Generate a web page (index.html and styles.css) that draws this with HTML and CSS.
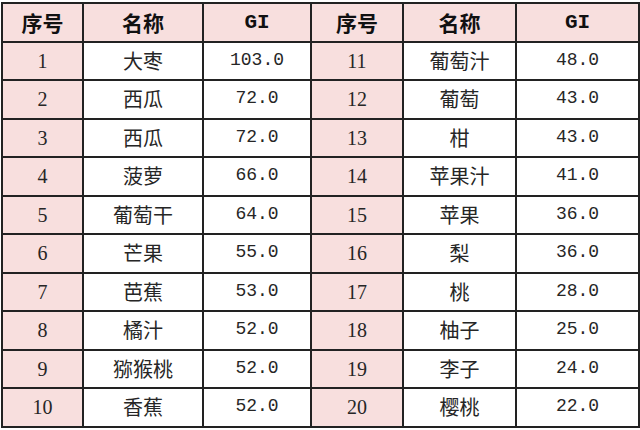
FILE: index.html
```html
<!DOCTYPE html>
<html lang="zh-CN">
<head>
<meta charset="utf-8">
<title>水果GI值</title>
<link rel="stylesheet" href="styles.css">
</head>
<body>
<table class="gi-table">
  <colgroup>
    <col class="c-no"><col class="c-name"><col class="c-gi">
    <col class="c-no2"><col class="c-name2"><col class="c-gi2">
  </colgroup>
  <thead>
    <tr>
      <th class="h-cjk">序号</th><th class="h-cjk">名称</th><th class="h-gi">GI</th>
      <th class="h-cjk">序号</th><th class="h-cjk">名称</th><th class="h-gi">GI</th>
    </tr>
  </thead>
  <tbody>
    <tr><td class="no">1</td><td class="name">大枣</td><td class="gi">103.0</td><td class="no">11</td><td class="name">葡萄汁</td><td class="gi">48.0</td></tr>
    <tr><td class="no">2</td><td class="name">西瓜</td><td class="gi">72.0</td><td class="no">12</td><td class="name">葡萄</td><td class="gi">43.0</td></tr>
    <tr><td class="no">3</td><td class="name">西瓜</td><td class="gi">72.0</td><td class="no">13</td><td class="name">柑</td><td class="gi">43.0</td></tr>
    <tr><td class="no">4</td><td class="name">菠萝</td><td class="gi">66.0</td><td class="no">14</td><td class="name">苹果汁</td><td class="gi">41.0</td></tr>
    <tr><td class="no">5</td><td class="name">葡萄干</td><td class="gi">64.0</td><td class="no">15</td><td class="name">苹果</td><td class="gi">36.0</td></tr>
    <tr><td class="no">6</td><td class="name">芒果</td><td class="gi">55.0</td><td class="no">16</td><td class="name">梨</td><td class="gi">36.0</td></tr>
    <tr><td class="no">7</td><td class="name">芭蕉</td><td class="gi">53.0</td><td class="no">17</td><td class="name">桃</td><td class="gi">28.0</td></tr>
    <tr><td class="no">8</td><td class="name">橘汁</td><td class="gi">52.0</td><td class="no">18</td><td class="name">柚子</td><td class="gi">25.0</td></tr>
    <tr><td class="no">9</td><td class="name">猕猴桃</td><td class="gi">52.0</td><td class="no">19</td><td class="name">李子</td><td class="gi">24.0</td></tr>
    <tr><td class="no">10</td><td class="name">香蕉</td><td class="gi">52.0</td><td class="no">20</td><td class="name">樱桃</td><td class="gi">22.0</td></tr>
  </tbody>
</table>
</body>
</html>
```

FILE: styles.css
```css
html, body {
  margin: 0;
  padding: 0;
  background: #ffffff;
}

.gi-table {
  margin: 2px 0 0 1px;
  width: 637px;
  table-layout: fixed;
  border-collapse: collapse;
  color: #262626;
}

.gi-table tr {
  height: 38.5px;
}

.c-no { width: 81px; }
.c-name { width: 120px; }
.c-gi { width: 108px; }
.c-no2 { width: 92px; }
.c-name2 { width: 113px; }
.c-gi2 { width: 123px; }

.gi-table th,
.gi-table td {
  border: 2px solid #222222;
  padding: 0;
  text-align: center;
  vertical-align: middle;
  line-height: 1.2;
}

.gi-table thead th {
  background: #f8dfde;
  color: #111111;
}

.h-cjk {
  font-family: "Noto Sans CJK SC", sans-serif;
  font-weight: 700;
  font-size: 21px;
}

.h-gi {
  font-family: "Liberation Mono", monospace;
  font-weight: 700;
  font-size: 21px;
}

.no {
  background: #f8dfde;
  font-family: "Liberation Serif", serif;
  font-size: 20px;
}

.name {
  font-family: "Noto Sans CJK SC", sans-serif;
  font-size: 20px;
}

.gi {
  font-family: "Liberation Mono", monospace;
  font-size: 18px;
}
```
